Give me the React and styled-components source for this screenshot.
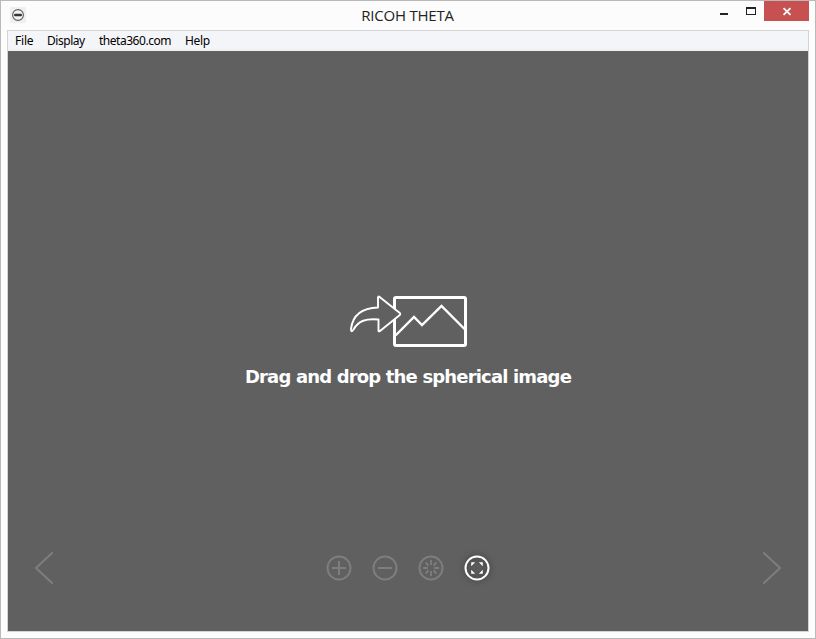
import React from "react";
import styled, { createGlobalStyle } from "styled-components";

const GlobalStyle = createGlobalStyle`
  * { box-sizing: border-box; }
  body { margin: 0; overflow: hidden; }
`;

const Window = styled.div`
  width: 816px;
  height: 639px;
  display: flex;
  flex-direction: column;
  padding: 0 6px 6px;
  background: #fcfcfc;
  border: 1px solid #b9b9b9;
  font-family: "Noto Sans", "Open Sans", sans-serif;
`;

const TitleBar = styled.header`
  height: 29px;
  flex: none;
  display: grid;
  grid-template-columns: 100px 1fr 100px;
  align-items: start;
`;

const AppIcon = styled.svg`
  width: 16px;
  height: 16px;
  margin: 6px 0 0 3px;
`;

const Title = styled.h1`
  margin: 0;
  padding-right: 1px;
  text-align: center;
  font-family: "Open Sans", "Noto Sans", sans-serif;
  font-size: 15px;
  font-weight: 400;
  line-height: 28px;
  letter-spacing: -0.2px;
  color: #222;
`;

const Controls = styled.div`
  display: flex;
  justify-content: flex-end;
`;

const ControlButton = styled.button`
  width: ${(p) => p.$width}px;
  height: 20px;
  padding: 0;
  border: 0;
  background: ${(p) => (p.$danger ? "#c75050" : "transparent")};
  svg { display: block; }
`;

const Client = styled.main`
  flex: 1;
  display: flex;
  flex-direction: column;
  border: 1px solid #d4d4d4;
`;

const MenuBar = styled.nav`
  height: 20px;
  flex: none;
  display: flex;
  background: #f4f5f8;
  border-bottom: 2px solid #f0f0f0;
  padding-left: 7px;
`;

const MenuItem = styled.span`
  width: ${(p) => p.$width}px;
  flex: none;
  font-size: 12px;
  line-height: 19px;
  letter-spacing: ${(p) => p.$spacing}px;
  white-space: nowrap;
  color: #000;
`;

const Viewer = styled.section`
  flex: 1;
  display: flex;
  flex-direction: column;
  align-items: center;
  background: #606060;
`;

const DropZone = styled.div`
  height: 492px;
  padding-top: 241px;
  display: flex;
  flex-direction: column;
  align-items: center;
`;

const DropIcon = styled.svg`
  width: 122px;
  height: 58px;
  flex: none;
`;

const DropLabel = styled.p`
  margin: 15px 0 0;
  font: bold 18px/24px "DejaVu Sans", Verdana, sans-serif;
  letter-spacing: -0.83px;
  white-space: nowrap;
  color: #fff;
`;

const Toolbar = styled.footer`
  width: 100%;
  height: 50px;
  padding: 0 24px;
  display: flex;
  align-items: center;
  justify-content: space-between;
`;

const Tools = styled.div`
  display: flex;
  gap: 14px;
`;

const ToolButton = styled.button`
  width: 32px;
  height: 32px;
  padding: 0;
  border: 0;
  background: none;
  color: ${(p) => (p.$active ? "#fff" : "#7e7e7e")};
  filter: ${(p) => (p.$active ? "drop-shadow(0 0 3px rgba(0,0,0,.5))" : "none")};
  svg { display: block; }
`;

const ArrowButton = styled.button`
  width: 24px;
  height: 36px;
  padding: 0;
  border: 0;
  background: none;
  color: #7e7e7e;
  svg { display: block; }
`;

const menu = [
  ["File", 32, -0.2],
  ["Display", 52, -0.45],
  ["theta360.com", 86, -0.47],
  ["Help", 40, -0.3],
];

const Tool = ({ active, label, children }) => (
  <ToolButton $active={active} aria-label={label}>
    <svg width="32" height="32" viewBox="0 0 32 32" fill="none" stroke="currentColor" strokeWidth="2">
      <circle cx="16" cy="16" r="11.5" />
      {children}
    </svg>
  </ToolButton>
);

const Arrow = ({ label, d }) => (
  <ArrowButton aria-label={label}>
    <svg width="24" height="36" fill="none" stroke="currentColor" strokeWidth="2" strokeLinecap="round">
      <path d={d} />
    </svg>
  </ArrowButton>
);

export default function App() {
  return (
    <>
      <GlobalStyle />
      <Window>
        <TitleBar>
          <AppIcon viewBox="0 0 16 16">
            <rect width="16" height="16" rx="1.5" fill="#efefef" />
            <circle cx="8" cy="8" r="5.4" fill="#f3f3f3" stroke="#5c5c5c" strokeWidth="1.1" />
            <rect x="4" y="6.8" width="8" height="2.4" rx="1.2" fill="#333" />
          </AppIcon>
          <Title>RICOH THETA</Title>
          <Controls>
            <ControlButton $width={27} aria-label="Minimize">
              <svg width="27" height="20"><rect x="10" y="12" width="8" height="2" fill="#222" /></svg>
            </ControlButton>
            <ControlButton $width={27} aria-label="Maximize">
              <svg width="27" height="20">
                <path fill="#222" fillRule="evenodd" d="M9 6h10v8H9zM10 8v5h8V8z" />
              </svg>
            </ControlButton>
            <ControlButton $width={45} $danger aria-label="Close">
              <svg width="45" height="20" stroke="#fff" strokeWidth="1.8">
                <path d="M19.5 7.2l7 6.6M26.5 7.2l-7 6.6" />
              </svg>
            </ControlButton>
          </Controls>
        </TitleBar>
        <Client>
          <MenuBar>
            {menu.map(([label, width, spacing]) => (
              <MenuItem key={label} $width={width} $spacing={spacing}>{label}</MenuItem>
            ))}
          </MenuBar>
          <Viewer>
            <DropZone>
              <DropIcon viewBox="347 292 122 58" fill="none" stroke="#fff">
                <rect x="394.5" y="297.5" width="71" height="48" rx="1.5" strokeWidth="3" />
                <path d="M395.5 335.5L414 317l8 8 19.5-19L465 329.5" strokeWidth="2.4" />
                <path
                  d="M378 297.5q0-1.5 1.6-.6L399.5 312.7q1.6 1.3 0 2.6L380 331q-1.5 1-1.5-.6V319.500C366 318.500 358.500 320.500 353.500 329.500q-2.700 4-2.500-.5C352.500 316.500 360 308 378 307.500Z"
                  fill="#606060"
                  strokeWidth="1.9"
                  strokeLinejoin="round"
                />
              </DropIcon>
              <DropLabel>Drag and drop the spherical image</DropLabel>
            </DropZone>
            <Toolbar>
              <Arrow label="Previous" d="M20 3L4 18l16 15" />
              <Tools>
                <Tool label="Zoom in"><path d="M9 16h14M16 9v14" /></Tool>
                <Tool label="Zoom out"><path d="M9 16h14" /></Tool>
                <Tool label="Auto rotate">
                  <path
                    d="M16 8v5M16 19v5M8 16h5M19 16h5M10.5 10.5l3 3M18.5 18.5l3 3M21.5 10.5l-3 3M13.5 18.5l-3 3"
                    strokeWidth="1.8"
                  />
                </Tool>
                <Tool active label="Full screen">
                  <path
                    d="M10.200 10.200h4l-4 4zM21.800 10.200h-4l4 4zM10.200 21.800h4l-4-4zM21.800 21.800h-4l4-4z"
                    fill="currentColor"
                    stroke="none"
                  />
                </Tool>
              </Tools>
              <Arrow label="Next" d="M4 3l16 15L4 33" />
            </Toolbar>
          </Viewer>
        </Client>
      </Window>
    </>
  );
}
